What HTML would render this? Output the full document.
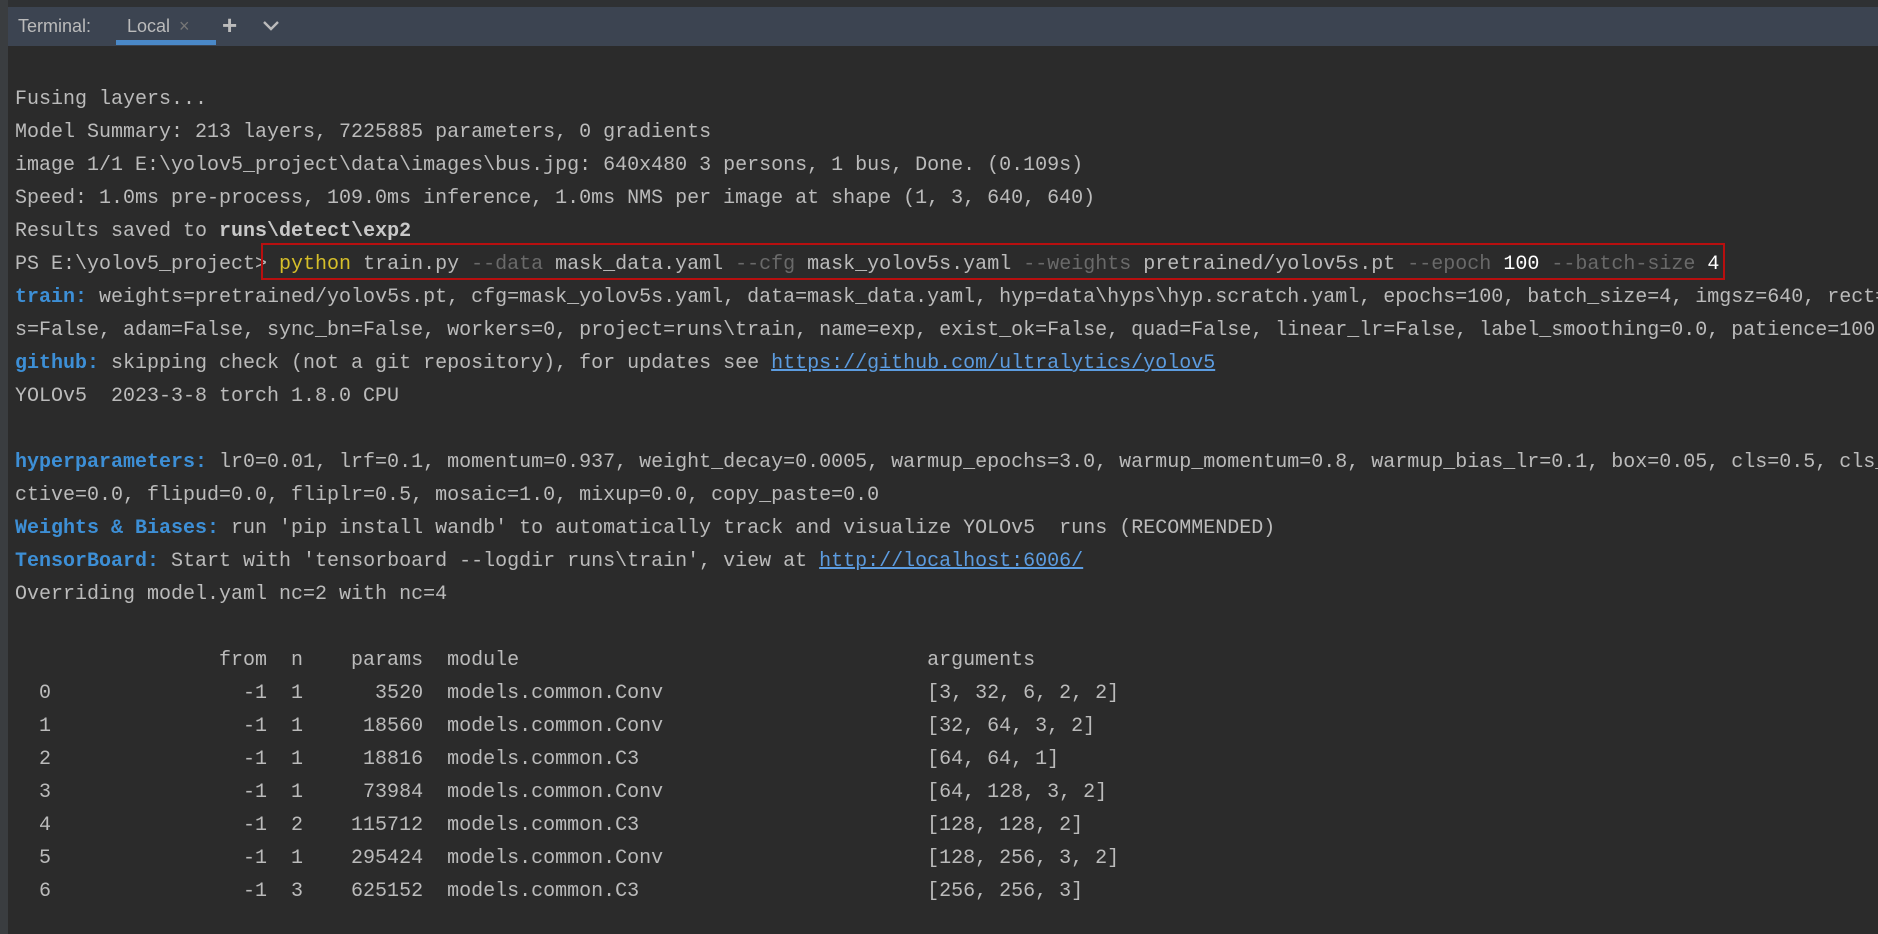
<!DOCTYPE html>
<html><head><meta charset="utf-8"><style>
html,body{margin:0;padding:0;width:1878px;height:934px;overflow:hidden;background:#2b2b2b;}
#gut{position:absolute;left:0;top:0;width:8px;height:934px;background:#3a3d40;}
#top{position:absolute;left:8px;top:0;width:1870px;height:7px;background:#2f3133;}
#tabs{position:absolute;left:8px;top:7px;width:1870px;height:39px;background:#3c4451;font-family:"Liberation Sans",sans-serif;font-size:18px;color:#bbbbbb;}
#tabs span{position:absolute;top:9px;}
#ul{position:absolute;left:108px;top:33px;width:100px;height:5px;background:#4a88c7;}
#term{position:absolute;left:15px;top:83px;font-family:"Liberation Mono",monospace;font-size:20px;line-height:33px;color:#bbbbbb;white-space:pre;}
.k{color:#3d8fd6;font-weight:bold}
.a{color:#5c9ce0;text-decoration:underline}
.y{color:#d6bf2a}
.g{color:#6a6a6a}
.w{color:#ffffff}
.b{font-weight:bold;color:#c8c8c8}
#box{position:absolute;left:261px;top:243px;width:1460px;height:33px;border:2.5px solid #b80f0f;}
</style></head><body>
<div id="gut"></div><div id="top"></div>
<div id="tabs"><span style="left:10px">Terminal:</span><span style="left:119px">Local</span><span style="left:171px;color:#777">×</span><span style="left:214px;font-size:26px;top:3px;font-weight:bold">+</span>
<svg style="position:absolute;left:254px;top:12px" width="18" height="14"><path d="M2 3 L9 10 L16 3" stroke="#bbb" stroke-width="2.4" fill="none"/></svg>
<div id="ul"></div></div>
<div id="term">Fusing layers...
Model Summary: 213 layers, 7225885 parameters, 0 gradients
image 1/1 E:\yolov5_project\data\images\bus.jpg: 640x480 3 persons, 1 bus, Done. (0.109s)
Speed: 1.0ms pre-process, 109.0ms inference, 1.0ms NMS per image at shape (1, 3, 640, 640)
Results saved to <span class="b">runs\detect\exp2</span>
PS E:\yolov5_project&gt; <span class="y">python</span> train.py <span class="g">--data</span> mask_data.yaml <span class="g">--cfg</span> mask_yolov5s.yaml <span class="g">--weights</span> pretrained/yolov5s.pt <span class="g">--epoch</span> <span class="w">100</span> <span class="g">--batch-size</span> <span class="w">4</span>
<span class="k">train:</span> weights=pretrained/yolov5s.pt, cfg=mask_yolov5s.yaml, data=mask_data.yaml, hyp=data\hyps\hyp.scratch.yaml, epochs=100, batch_size=4, imgsz=640, rect=False
s=False, adam=False, sync_bn=False, workers=0, project=runs\train, name=exp, exist_ok=False, quad=False, linear_lr=False, label_smoothing=0.0, patience=100
<span class="k">github:</span> skipping check (not a git repository), for updates see <span class="a">https://github.com/ultralytics/yolov5</span>
YOLOv5  2023-3-8 torch 1.8.0 CPU

<span class="k">hyperparameters:</span> lr0=0.01, lrf=0.1, momentum=0.937, weight_decay=0.0005, warmup_epochs=3.0, warmup_momentum=0.8, warmup_bias_lr=0.1, box=0.05, cls=0.5, cls_pw=1.0
ctive=0.0, flipud=0.0, fliplr=0.5, mosaic=1.0, mixup=0.0, copy_paste=0.0
<span class="k">Weights &amp; Biases:</span> run 'pip install wandb' to automatically track and visualize YOLOv5  runs (RECOMMENDED)
<span class="k">TensorBoard:</span> Start with 'tensorboard --logdir runs\train', view at <span class="a">http://localhost:6006/</span>
Overriding model.yaml nc=2 with nc=4

                 from  n    params  module                                  arguments
  0                -1  1      3520  models.common.Conv                      [3, 32, 6, 2, 2]
  1                -1  1     18560  models.common.Conv                      [32, 64, 3, 2]
  2                -1  1     18816  models.common.C3                        [64, 64, 1]
  3                -1  1     73984  models.common.Conv                      [64, 128, 3, 2]
  4                -1  2    115712  models.common.C3                        [128, 128, 2]
  5                -1  1    295424  models.common.Conv                      [128, 256, 3, 2]
  6                -1  3    625152  models.common.C3                        [256, 256, 3]
</div>
<div id="box"></div>
</body></html>
